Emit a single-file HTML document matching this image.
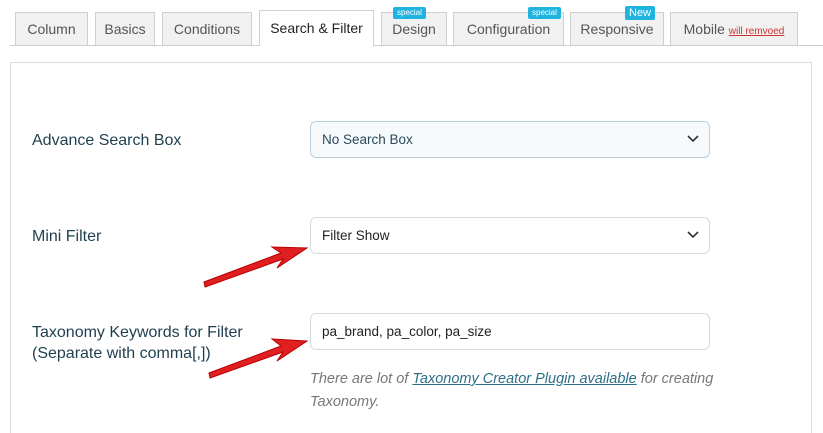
<!DOCTYPE html>
<html style="overflow:hidden;height:433px"><head><style>
body{margin:0;width:823px;height:433px;background:#fff;font-family:"Liberation Sans",sans-serif;position:relative;overflow:hidden}
.tab{position:absolute;top:12px;height:33px;background:#f1f1f1;border:1px solid #d0d0d0;border-bottom:none;box-sizing:border-box;color:#555;font-size:14px;line-height:32px;text-align:center}
.tab.act{background:#fff;top:10px;height:36px;color:#222;line-height:34px}
.line{position:absolute;top:45px;left:10px;right:0;height:1px;background:#ccc}
.badge{position:absolute;top:-6px;height:12px;background:#1fb3e0;border-radius:2px;color:#fff;font-size:8px;line-height:12px;padding:0 4px}
.panel{position:absolute;left:10px;top:62px;width:802px;height:380px;border:1px solid #ddd;box-sizing:border-box}
.lbl{position:absolute;left:32px;color:#1f3f4f;font-size:16px;line-height:21px}
.sel{position:absolute;left:310px;width:400px;height:37px;border:1px solid #d3dbe0;border-radius:6px;box-sizing:border-box;font-size:13.5px;line-height:35px;padding-left:11px;color:#222}
.chev{position:absolute;right:10px;top:13px}
.note{position:absolute;left:310px;top:368px;width:460px;color:#777;font-style:italic;font-size:14.5px;line-height:23px}
.note u{color:#2c6e88}
</style></head><body>
<div class="tab" style="left:15px;width:73px">Column</div>
<div class="tab" style="left:95px;width:60px">Basics</div>
<div class="tab" style="left:162px;width:90px">Conditions</div>
<div class="tab" style="left:381px;width:66px">Design<span class="badge" style="left:11px">special</span></div>
<div class="tab" style="left:453px;width:111px">Configuration<span class="badge" style="left:74px">special</span></div>
<div class="tab" style="left:570px;width:94px">Responsive<span class="badge" style="left:54px;font-size:11px;height:14px;line-height:14px;top:-7px">New</span></div>
<div class="tab" style="left:670px;width:128px">Mobile <span style="color:#c33;font-size:10px;text-decoration:underline">will remvoed</span></div>
<div class="line"></div>
<div class="tab act" style="left:259px;width:115px">Search &amp; Filter</div>
<div class="panel"></div>
<div class="lbl" style="top:130px">Advance Search Box</div>
<div class="sel" style="top:121px;background:#f6fafc;border-color:#b9cfd8;color:#2a4a5a">No Search Box<svg class="chev" width="12" height="8"><path d="M1 1l5 5 5-5" fill="none" stroke="#333" stroke-width="1.6"/></svg></div>
<div class="lbl" style="top:226px">Mini Filter</div>
<div class="sel" style="top:217px">Filter Show<svg class="chev" width="12" height="8"><path d="M1 1l5 5 5-5" fill="none" stroke="#333" stroke-width="1.6"/></svg></div>
<div class="lbl" style="top:322px">Taxonomy Keywords for Filter<br>(Separate with comma[,])</div>
<div class="sel" style="top:313px">pa_brand, pa_color, pa_size</div>
<div class="note">There are lot of <u>Taxonomy Creator Plugin available</u> for creating Taxonomy.</div>
<svg style="position:absolute;left:0;top:0" width="823" height="433">
<polygon points="205,287 283,259 277,268 307,248 272,247 281,253 204,282" fill="#e02020" stroke="#b00" stroke-width="1"/>
<polygon points="210,378 283,352 277,361 307,341 272,339 281,346 209,373" fill="#e02020" stroke="#b00" stroke-width="1"/>
</svg>
</body></html>
